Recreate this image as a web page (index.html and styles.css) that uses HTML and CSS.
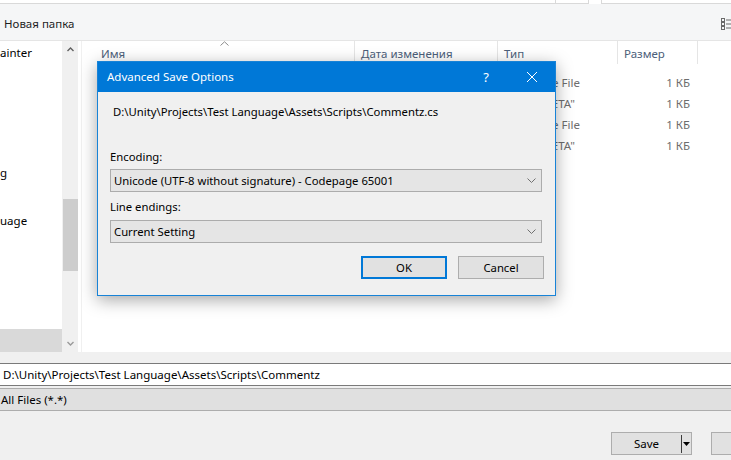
FILE: index.html
```html
<!DOCTYPE html>
<html lang="ru">
<head>
<meta charset="utf-8">
<title>Save As</title>
<link rel="stylesheet" href="styles.css">
</head>
<body>
<div class="topstrip">
  <div class="addr"></div>
  <div class="refresh"></div>
  <div class="tgap"></div>
  <div class="search"></div>
</div>

<div class="toolbar">
  <span class="newfolder">Новая папка</span>
  <svg class="viewicon" width="10" height="12" viewBox="0 0 10 12">
    <rect x="0.5" y="0.5" width="3" height="3" fill="none" stroke="#6a6a6a" stroke-width="1"/>
    <rect x="0.5" y="4.5" width="3" height="3" fill="none" stroke="#6a6a6a" stroke-width="1"/>
    <rect x="0.5" y="8.5" width="3" height="3" fill="none" stroke="#6a6a6a" stroke-width="1"/>
    <line x1="5" y1="2" x2="10" y2="2" stroke="#6a6a6a"/>
    <line x1="5" y1="6" x2="10" y2="6" stroke="#6a6a6a"/>
    <line x1="5" y1="10" x2="10" y2="10" stroke="#6a6a6a"/>
  </svg>
</div>

<div class="content">
  <div class="nav">
    <div class="navrow">ainter</div>
    <div class="navrow"></div>
    <div class="navrow"></div>
    <div class="navrow"></div>
    <div class="navrow"></div>
    <div class="navrow">g</div>
    <div class="navrow"></div>
    <div class="navrow">uage</div>
    <div class="navrow"></div>
    <div class="navrow"></div>
    <div class="navrow"></div>
    <div class="navrow"></div>
    <div class="navrow selected"></div>
  </div>
  <div class="vscroll">
    <div class="sbtn">
      <svg width="7" height="5" viewBox="0 0 7 5"><polyline points="0.5,4 3.5,1 6.5,4" fill="none" stroke="#606060" stroke-width="1.4"/></svg>
    </div>
    <div class="thumb"></div>
    <div class="sfill"></div>
    <div class="sbtn">
      <svg width="7" height="5" viewBox="0 0 7 5"><polyline points="0.5,1 3.5,4 6.5,1" fill="none" stroke="#9a9a9a" stroke-width="1.4"/></svg>
    </div>
  </div>
  <div class="nspacer"></div>
  <div class="list">
    <div class="lhead">
      <div class="col c-name">Имя
        <svg class="sortarrow" width="9" height="5" viewBox="0 0 9 5"><polyline points="0.5,4.5 4.5,0.8 8.5,4.5" fill="none" stroke="#8a8a8a" stroke-width="1"/></svg>
      </div>
      <div class="col c-date">Дата изменения</div>
      <div class="col c-type">Тип</div>
      <div class="col c-size">Размер</div>
    </div>
    <div class="rows">
      <div class="lrow"><div class="cell c-name"></div><div class="cell c-date"></div><div class="cell c-type">C# Source File</div><div class="cell c-size">1 КБ</div></div>
      <div class="lrow"><div class="cell c-name"></div><div class="cell c-date"></div><div class="cell c-type">Файл "META"</div><div class="cell c-size">1 КБ</div></div>
      <div class="lrow"><div class="cell c-name"></div><div class="cell c-date"></div><div class="cell c-type">C# Source File</div><div class="cell c-size">1 КБ</div></div>
      <div class="lrow"><div class="cell c-name"></div><div class="cell c-date"></div><div class="cell c-type">Файл "META"</div><div class="cell c-size">1 КБ</div></div>
    </div>
  </div>
</div>

<div class="band"></div>
<div class="filename">D:\Unity\Projects\Test Language\Assets\Scripts\Commentz</div>
<div class="band2"></div>
<div class="filetype">All Files (*.*)</div>

<div class="footer">
  <div class="wbtn savebtn">
    <span class="savelabel">Save</span>
    <span class="splitline"></span>
    <span class="splitarrow"><svg width="7" height="4" viewBox="0 0 7 4"><polygon points="0,0 7,0 3.5,4" fill="#000"/></svg></span>
  </div>
  <div class="wbtn cancelbtn"></div>
</div>

<div class="dialog">
  <div class="dtitle">
    <span class="dtitletext">Advanced Save Options</span>
    <span class="dbtn">?</span>
    <span class="dbtn">
      <svg width="10" height="10" viewBox="0 0 10 10"><line x1="0" y1="0" x2="10" y2="10" stroke="#fff" stroke-width="1"/><line x1="10" y1="0" x2="0" y2="10" stroke="#fff" stroke-width="1"/></svg>
    </span>
  </div>
  <div class="dbody">
    <div class="dpath">D:\Unity\Projects\Test Language\Assets\Scripts\Commentz.cs</div>
    <div class="dlabel first">Encoding:</div>
    <div class="combo">
      <span>Unicode (UTF-8 without signature) - Codepage 65001</span>
      <svg width="9" height="5" viewBox="0 0 9 5"><polyline points="0.5,0.5 4.5,4.5 8.5,0.5" fill="none" stroke="#707070" stroke-width="1"/></svg>
    </div>
    <div class="dlabel">Line endings:</div>
    <div class="combo">
      <span>Current Setting</span>
      <svg width="9" height="5" viewBox="0 0 9 5"><polyline points="0.5,0.5 4.5,4.5 8.5,0.5" fill="none" stroke="#707070" stroke-width="1"/></svg>
    </div>
    <div class="dbuttons">
      <div class="dbutton default">OK</div>
      <div class="dbutton">Cancel</div>
    </div>
  </div>
</div>
</body>
</html>
```

FILE: styles.css
```css
* { box-sizing: border-box; }
html, body { margin: 0; padding: 0; }
body {
  width: 731px;
  height: 460px;
  overflow: hidden;
  position: relative;
  display: flex;
  flex-direction: column;
  background: #f0f0f0;
  font-family: "Noto Sans", "Open Sans", sans-serif;
  font-size: 11.5px;
  color: #000;
}

/* top strip (address / search boxes, cut off) */
.topstrip { height: 4px; display: flex; background: #fff; flex-shrink: 0; }
.addr { width: 556px; border-bottom: 1px solid #d9d9d9; border-right: 1px solid #d9d9d9; }
.refresh { width: 33px; border-bottom: 1px solid #d9d9d9; border-right: 1px solid #d9d9d9; }
.tgap { width: 12px; }
.search { flex: 1; border-bottom: 1px solid #d9d9d9; border-left: 1px solid #d9d9d9; }

/* toolbar */
.toolbar {
  height: 37px;
  flex-shrink: 0;
  background: #f5f6f7;
  border-bottom: 1px solid #e5e5e5;
  display: flex;
  align-items: center;
  justify-content: space-between;
  padding: 3px 0 0 4px;
}
.newfolder { color: #1e1e1e; }

/* main content */
.content { height: 311px; flex-shrink: 0; display: flex; background: #fff; }
.nav { width: 62px; overflow: hidden; }
.navrow { height: 24px; line-height: 24px; white-space: nowrap; color: #000; }
.navrow.selected { background: #d9d9d9; }

.vscroll { width: 16px; background: #f0f0f0; display: flex; flex-direction: column; }
.sbtn { height: 17px; display: flex; align-items: center; justify-content: center; }
.thumb { margin: 141px 0 0 1px; height: 72px; background: #cdcdcd; }
.sfill { flex: 1; }
.nspacer { width: 3px; }

.list { flex: 1; border-left: 1px solid #f0f0f0; overflow: hidden; }
.lhead { display: flex; height: 23px; }
.col {
  height: 23px;
  line-height: 25px;
  color: #4c607a;
  border-right: 1px solid #e5e5e5;
  padding-left: 6px;
  white-space: nowrap;
  position: relative;
}
.c-name { width: 273px; padding-left: 19px; }
.c-date { width: 143px; }
.c-type { width: 120px; }
.c-size { width: 80px; }
.sortarrow { position: absolute; left: 138px; top: 0; }

.rows { padding-top: 8px; }
.lrow { display: flex; height: 21px; line-height: 21px; color: #6d6d6d; }
.cell { white-space: nowrap; overflow: hidden; padding-left: 6px; }
.lrow .c-size { text-align: right; padding-right: 8px; }

/* bottom fields */
.band { height: 11px; flex-shrink: 0; }
.filename {
  height: 23px;
  flex-shrink: 0;
  background: #fff;
  border-top: 1px solid #7a7a7a;
  border-bottom: 1px solid #7a7a7a;
  line-height: 21px;
  padding-left: 3px;
}
.band2 { height: 2px; flex-shrink: 0; }
.filetype {
  height: 23px;
  flex-shrink: 0;
  background: #e0e0e0;
  border-top: 1px solid #adadad;
  border-bottom: 1px solid #adadad;
  line-height: 21px;
  padding-left: 1px;
}

.footer {
  flex: 1;
  display: flex;
  justify-content: flex-end;
  align-items: flex-start;
  padding-top: 21px;
  gap: 19px;
}
.wbtn {
  width: 81px;
  height: 23px;
  flex-shrink: 0;
  background: #e1e1e1;
  border: 1px solid #adadad;
  display: flex;
  align-items: center;
  justify-content: center;
}
.cancelbtn { margin-right: -61px; }
.savebtn { justify-content: flex-start; }
.savelabel { width: 70px; text-align: center; }
.splitline { width: 1px; height: 18px; background: #3c3c3c; }
.splitarrow { width: 9px; display: flex; justify-content: center; align-items: center; }

/* dialog overlay */
.dialog {
  position: absolute;
  left: 97px;
  top: 61px;
  width: 459px;
  height: 235px;
  border: 1px solid #1883d7;
  background: #f0f0f0;
  box-shadow: 0 4px 16px rgba(0, 0, 0, 0.35);
  display: flex;
  flex-direction: column;
}
.dtitle {
  height: 30px;
  flex-shrink: 0;
  background: #0078d7;
  color: #fff;
  display: flex;
  align-items: center;
}
.dtitletext { flex: 1; padding-left: 9px; padding-bottom: 1px; }
.dbtn {
  width: 46px;
  height: 30px;
  display: flex;
  align-items: center;
  justify-content: center;
  font-size: 13px;
}
.dbody { flex: 1; padding: 0 11px 0 12px; font-size: 11.3px; }
.dpath { margin-top: 12px; margin-left: 3px; line-height: 16px; }
.dlabel { margin-top: 7px; line-height: 16px; margin-bottom: 5px; }
.dlabel.first { margin-top: 29px; margin-bottom: 4px; }
.combo {
  height: 23px;
  margin-right: 2px;
  background: #e5e5e5;
  border: 1px solid #acacac;
  display: flex;
  align-items: center;
  justify-content: space-between;
  padding: 0 5px 0 3px;
}
.dbuttons { display: flex; justify-content: flex-end; gap: 11px; margin-top: 13px; }
.dbutton {
  width: 86px;
  height: 23px;
  background: #e1e1e1;
  border: 1px solid #adadad;
  display: flex;
  align-items: center;
  justify-content: center;
}
.dbutton.default { border: 2px solid #0078d7; }
```
